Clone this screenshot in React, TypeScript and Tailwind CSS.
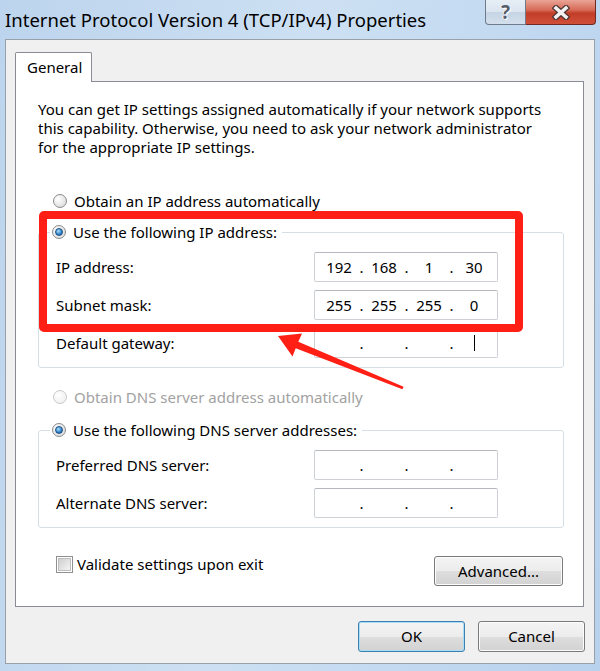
import React from "react";

const FONT = "font-['Noto_Sans',sans-serif]";

function Radio({ checked = false, disabled = false }: { checked?: boolean; disabled?: boolean }) {
  return (
    <div
      className={
        disabled
          ? "flex h-[14px] w-[14px] shrink-0 items-center justify-center rounded-full border border-[#c9c9c9] bg-[radial-gradient(circle_at_35%_35%,#ffffff,#ececec)]"
          : "flex h-[14px] w-[14px] shrink-0 items-center justify-center rounded-full border border-[#8a8b8c] bg-[radial-gradient(circle_at_35%_35%,#ffffff,#d4d4d4)]"
      }
    >
      {checked && (
        <div className="h-[8px] w-[8px] rounded-full border border-[#1b4f86] bg-[radial-gradient(circle_at_40%_35%,#a8e2ff,#2f7fc4_60%,#174f8e)]" />
      )}
    </div>
  );
}

function RadioRow({ label, checked, disabled }: { label: string; checked?: boolean; disabled?: boolean }) {
  return (
    <div className="flex h-[20px] items-center gap-[7px] leading-[20px]">
      <Radio checked={checked} disabled={disabled} />
      <span className={disabled ? "text-[#a2a2a2]" : "text-black"}>{label}</span>
    </div>
  );
}

function IpField({ octets, caret = false }: { octets: string[]; caret?: boolean }) {
  return (
    <div className="flex h-[30px] w-[184px] items-center rounded-[2px] border border-[#cdd1d6] border-t-[#b5b9bf] bg-white pl-[5px]">
      {[0, 1, 2, 3].map((i) => (
        <React.Fragment key={i}>
          {i > 0 && <span className="w-[7px] text-center">.</span>}
          <span className="flex w-[38px] items-center justify-center">
            {octets[i]}
            {caret && i === 3 && <span className="inline-block h-[16px] w-px bg-black" />}
          </span>
        </React.Fragment>
      ))}
    </div>
  );
}

function FieldRow({ label, octets, caret }: { label: string; octets: string[]; caret?: boolean }) {
  return (
    <div className="flex h-[38px] items-center">
      <span className="w-[258px]">{label}</span>
      <IpField octets={octets} caret={caret} />
    </div>
  );
}

function WinButton({ children, primary = false, className = "" }: { children: React.ReactNode; primary?: boolean; className?: string }) {
  return (
    <button
      className={
        (primary
          ? "border-[#3c7fb1] shadow-[inset_0_0_0_1px_#a9dcf5] "
          : "border-[#7a7a7a] shadow-[inset_0_0_0_1px_#fcfcfc] ") +
        "flex items-center justify-center rounded-[3px] border bg-[linear-gradient(to_bottom,#f4f4f4_0%,#ececec_50%,#dedede_50%,#d2d2d2_100%)] text-[15px] text-black " +
        className
      }
    >
      {children}
    </button>
  );
}

export default function App() {
  const empty = ["", "", "", ""];
  return (
    <div
      className={`${FONT} relative h-[671px] w-[600px] overflow-hidden bg-[linear-gradient(100deg,#bcd4ed_0%,#cde0f3_45%,#c3daf1_70%,#b8d1ec_100%)] text-[15px] text-black`}
    >
      {/* title bar */}
      <div className="flex h-[39px] items-start">
        <div className="pl-[5px] pt-[8px] text-[18.5px] leading-[24px] text-black">
          Internet Protocol Version 4 (TCP/IPv4) Properties
        </div>
        <div className="ml-auto mr-[4px] flex">
          <div className="flex h-[25px] w-[41px] items-center justify-center rounded-bl-[4px] border border-t-0 border-[#6f7b8a] bg-[linear-gradient(to_bottom,#e7eef6_0%,#dbe5f0_48%,#c6d4e4_52%,#d3dfec_100%)]">
            <span className="text-[19px] font-bold leading-none text-[#56606c] [text-shadow:1px_1px_0_#ffffff,-1px_0_0_#ffffff]">
              ?
            </span>
          </div>
          <div className="flex h-[25px] w-[70px] items-center justify-center rounded-br-[4px] border border-l-0 border-t-0 border-[#6e2a22] bg-[linear-gradient(to_bottom,#e9a497_0%,#d76a55_42%,#c23d27_55%,#d0503a_100%)]">
            <svg width="18" height="15" viewBox="0 0 18 15">
              <path d="M4 3 L14 12 M14 3 L4 12" stroke="#4a3434" strokeWidth="6" strokeLinecap="square" />
              <path d="M4 3 L14 12 M14 3 L4 12" stroke="#f4f1f1" strokeWidth="3.6" strokeLinecap="square" />
            </svg>
          </div>
        </div>
      </div>

      {/* window body */}
      <div className="mx-[5px] h-[625px] border border-[#98a0a9] bg-[#f0f0f0] px-[9px] pt-[12px]">
        <div className="relative z-10 -mb-px h-[30px] w-[77px] rounded-t-[2px] border border-b-0 border-[#898c95] bg-white pl-[11px] pt-[4px] leading-[20px]">
          General
        </div>
        <div className="h-[526px] w-[569px] border border-[#898c95] bg-white pl-[22px] pr-[19px] pt-[18px]">
          <p className="leading-[19px]">
            You can get IP settings assigned automatically if your network supports
            <br />
            this capability. Otherwise, you need to ask your network administrator
            <br />
            for the appropriate IP settings.
          </p>

          <div className="mt-[34px] pl-[15px]">
            <RadioRow label="Obtain an IP address automatically" />
          </div>

          <fieldset className="mt-[11px] rounded-[3px] border border-[#d5dfe5] pb-[5px]">
            <legend className="ml-[11px] block h-[20px] pl-[2px] pr-[5px]">
              <RadioRow label="Use the following IP address:" checked />
            </legend>
            <div className="pl-[17px] pt-[6px]">
              <FieldRow label="IP address:" octets={["192", "168", "1", "30"]} />
              <FieldRow label="Subnet mask:" octets={["255", "255", "255", "0"]} />
              <FieldRow label="Default gateway:" octets={empty} caret />
            </div>
          </fieldset>

          <div className="mt-[19px] pl-[15px]">
            <RadioRow label="Obtain DNS server address automatically" disabled />
          </div>

          <fieldset className="mt-[13px] rounded-[3px] border border-[#d5dfe5] pb-[5px]">
            <legend className="ml-[11px] block h-[20px] pl-[2px] pr-[5px]">
              <RadioRow label="Use the following DNS server addresses:" checked />
            </legend>
            <div className="pl-[17px] pt-[6px]">
              <FieldRow label="Preferred DNS server:" octets={empty} />
              <FieldRow label="Alternate DNS server:" octets={empty} />
            </div>
          </fieldset>

          <div className="mt-[28px] flex items-start justify-between pl-[18px] pr-px">
            <label className="flex h-[17px] items-center gap-[4px]">
              <span className="flex h-[17px] w-[17px] items-center justify-center border border-[#8e8f8f] bg-white">
                <span className="h-[13px] w-[13px] border border-[#bdbdbd] bg-[linear-gradient(135deg,#cfcfcf,#f4f4f4)]" />
              </span>
              <span>Validate settings upon exit</span>
            </label>
            <WinButton className="h-[30px] w-[129px]">Advanced...</WinButton>
          </div>
        </div>

        <div className="mt-[14px] flex justify-end gap-[13px]">
          <WinButton primary className="h-[31px] w-[107px]">
            OK
          </WinButton>
          <WinButton className="h-[31px] w-[107px]">Cancel</WinButton>
        </div>
      </div>

      {/* annotation overlay */}
      <div className="pointer-events-none absolute left-[39px] top-[211px] h-[121px] w-[484px] rounded-[5px] border-[8px] border-[#ff1f14]" />
      <svg className="pointer-events-none absolute left-0 top-0" width="600" height="671" viewBox="0 0 600 671">
        <polygon
          points="278,336 302,333.5 298.3,341.8 403.6,386.8 402.4,389.2 295.7,348.2 292.5,356.5"
          fill="#ff1f14"
        />
      </svg>
    </div>
  );
}
